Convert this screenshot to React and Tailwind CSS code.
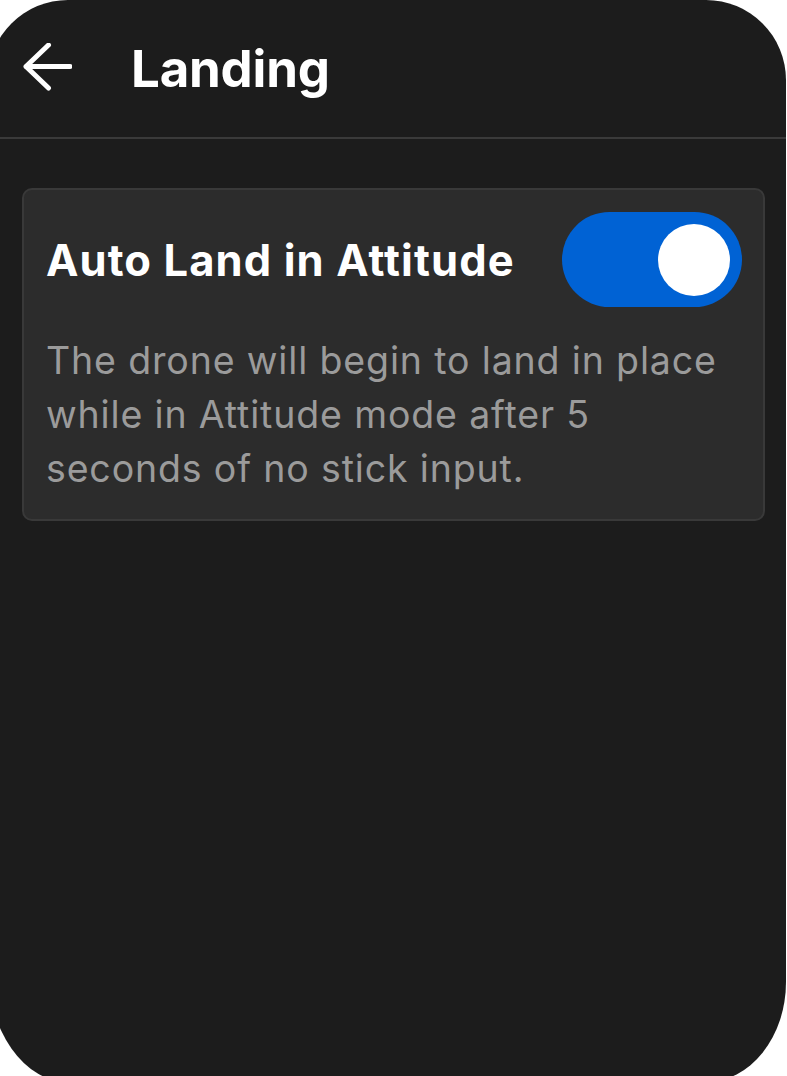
import React from "react";

export default function App() {
  return (
    <div
      className="w-[787px] h-[1076px] overflow-hidden bg-white"
      style={{ fontFamily: "Inter, 'Noto Sans', sans-serif" }}
    >
      <div className="-ml-[12px] w-[798px] h-[1082px] bg-[#1c1c1c] rounded-tl-[80px] rounded-tr-[80px] rounded-bl-[80px_114px] rounded-br-[80px_100px] pl-[12px] flex flex-col">
        <header className="h-[139px] border-b-2 border-[#3a3a3a] flex items-center pl-[22px] pr-[12px] shrink-0">
          <svg width="50" height="48" viewBox="0 0 50 48" className="shrink-0 -mt-[3px]">
            <path
              d="M48 23.5H4 M26.5 2 L4 23.5 L26.5 45"
              fill="none"
              stroke="#ffffff"
              strokeWidth="5"
              strokeLinecap="round"
              strokeLinejoin="round"
            />
          </svg>
          <h1 className="ml-[59px] text-[51px] leading-none font-bold text-white tracking-[-0.2px]">
            Landing
          </h1>
        </header>

        <div className="mt-[49px] ml-[22px] w-[743px] rounded-[10px] border-2 border-[#393939] bg-[#2c2c2c] pl-[22px] pr-[21px] pt-[22px] pb-[23px]">
          <div className="flex items-center justify-between">
            <h2 className="text-[43.5px] leading-none font-bold text-white tracking-[1.1px] mt-[3px]">
              Auto Land in Attitude
            </h2>
            <div className="w-[180px] h-[95px] rounded-full bg-[#0062d4] flex items-center justify-end pr-[12px]">
              <div className="w-[72px] h-[72px] rounded-full bg-white" />
            </div>
          </div>
          <p className="mt-[27px] text-[37.5px] leading-[54px] text-[#9b9b9b] tracking-[0.85px]">
            The drone will begin to land in place while in Attitude mode after 5 seconds of no stick input.
          </p>
        </div>
      </div>
    </div>
  );
}
